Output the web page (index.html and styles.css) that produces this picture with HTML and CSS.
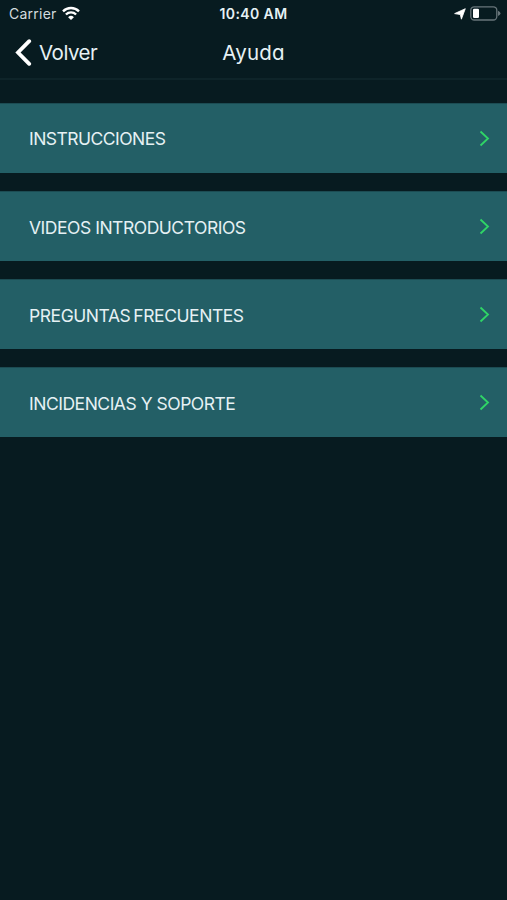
FILE: index.html
```html
<!DOCTYPE html>
<html lang="es">
  <head>
    <meta charset="utf-8">
    <title>Ayuda</title>
    <link rel="stylesheet" href="styles.css">
  </head>

  <body>

    <div class="status-bar">
      <div class="status-left">
        <span class="carrier">Carrier</span>
        <svg class="wifi" width="20" height="15" viewBox="0 0 20 15">
          <path d="M2 5.3 A11.5 11.5 0 0 1 18 5.3"/>
          <path d="M4.9 8.5 A7.3 7.3 0 0 1 15.1 8.5"/>
          <path class="wifi-dot" d="M10 14 L7.1 11.2 A4.2 4.2 0 0 1 12.9 11.2 Z"/>
        </svg>
      </div>
      <div class="time">10:40 AM</div>
      <div class="status-right">
        <svg width="12" height="12" viewBox="0 0 12 12">
          <path fill="#fff" stroke="#fff" stroke-width="0.8" stroke-linejoin="round" d="M11.3 0.7 L7.4 11.2 L6.3 6.6 L0.6 5.6 Z"/>
        </svg>
        <svg width="31" height="15" viewBox="0 0 31 15">
          <rect x="0.8" y="0.8" width="26" height="13.2" rx="3.5" fill="none" stroke="#68757a" stroke-width="1.3"/>
          <rect x="3" y="2.8" width="6" height="9.2" rx="1.3" fill="#fff"/>
          <path fill="#68757a" d="M28 4.8 Q30.5 6 30.5 7.4 Q30.5 8.8 28 10 Z"/>
        </svg>
      </div>
    </div>

    <div class="nav-bar">
      <a class="back">
        <svg width="17" height="27" viewBox="0 0 17 27">
          <path d="M14.2 2.2 L3 13.5 L14.2 24.8"/>
        </svg>
        <span class="back-text">Volver</span>
      </a>
      <div class="title">Ayuda</div>
    </div>

    <div class="menu">
      <div class="menu-item">
        <span class="menu-text instrucciones">INSTRUCCIONES</span>
        <svg class="arrow" width="11" height="17" viewBox="0 0 11 17"><path d="M1.5 1.5 L9 8.5 L1.5 15.5"/></svg>
      </div>
      <div class="menu-item">
        <span class="menu-text videos">VIDEOS INTRODUCTORIOS</span>
        <svg class="arrow" width="11" height="17" viewBox="0 0 11 17"><path d="M1.5 1.5 L9 8.5 L1.5 15.5"/></svg>
      </div>
      <div class="menu-item">
        <span class="menu-text preguntas">PREGUNTAS FRECUENTES</span>
        <svg class="arrow" width="11" height="17" viewBox="0 0 11 17"><path d="M1.5 1.5 L9 8.5 L1.5 15.5"/></svg>
      </div>
      <div class="menu-item">
        <span class="menu-text incidencias">INCIDENCIAS Y SOPORTE</span>
        <svg class="arrow" width="11" height="17" viewBox="0 0 11 17"><path d="M1.5 1.5 L9 8.5 L1.5 15.5"/></svg>
      </div>
    </div>

  </body>

</html>
```
FILE: styles.css
```css
body{
  margin: 0;
  min-height: 100vh;
  background-color: #071b20;
  color: #e6f1f4;
  font-family: Inter, "Liberation Sans", sans-serif;
}
svg{
  display: block;
}
.status-bar{
  display: grid;
  grid-template-columns: 1fr auto 1fr;
  align-items: center;
  height: 27px;
  padding-left: 9px;
  padding-right: 6px;
}
.status-left{
  display: flex;
  align-items: center;
  gap: 4px;
}
.carrier{
  font-size: 14px;
  letter-spacing: 0.25px;
  color: #d3dcdf;
}
.wifi{
  fill: none;
  stroke: #fff;
  stroke-width: 2.4;
}
.wifi .wifi-dot{
  fill: #fff;
  stroke: none;
}
.time{
  margin-left: -3px;
  font-size: 14px;
  font-weight: 600;
  letter-spacing: 0.4px;
}
.status-right{
  display: flex;
  justify-content: flex-end;
  align-items: center;
  gap: 4px;
}
.nav-bar{
  display: grid;
  grid-template-columns: 1fr auto 1fr;
  align-items: center;
  box-sizing: border-box;
  height: 53px;
  padding-bottom: 1px;
  border-bottom: 2px solid #0e2429;
}
.back{
  display: flex;
  align-items: center;
  gap: 7px;
  padding-left: 15px;
}
.back path{
  fill: none;
  stroke: #fff;
  stroke-width: 3.8;
  stroke-linecap: round;
}
.back-text{
  font-size: 20.5px;
  letter-spacing: -0.5px;
}
.title{
  font-size: 20.5px;
  letter-spacing: 0.2px;
  font-feature-settings: "cv11";
}
.menu{
  display: flex;
  flex-direction: column;
  gap: 18px;
  padding-top: 23px;
}
.menu-item{
  display: flex;
  justify-content: space-between;
  align-items: center;
  box-sizing: border-box;
  height: 70px;
  padding-left: 29px;
  padding-right: 17px;
  background-color: #235f66;
  border-top: 1px solid #1c4c53;
}
.menu-text{
  padding-top: 2px;
  font-size: 17.5px;
}
.instrucciones{
  padding-top: 0;
  letter-spacing: -0.53px;
}
.videos{
  letter-spacing: -0.47px;
}
.preguntas{
  letter-spacing: -0.44px;
  word-spacing: -1.5px;
}
.incidencias{
  letter-spacing: -0.48px;
}
.arrow{
  fill: none;
  stroke: #2fd566;
  stroke-width: 1.8;
}
```
